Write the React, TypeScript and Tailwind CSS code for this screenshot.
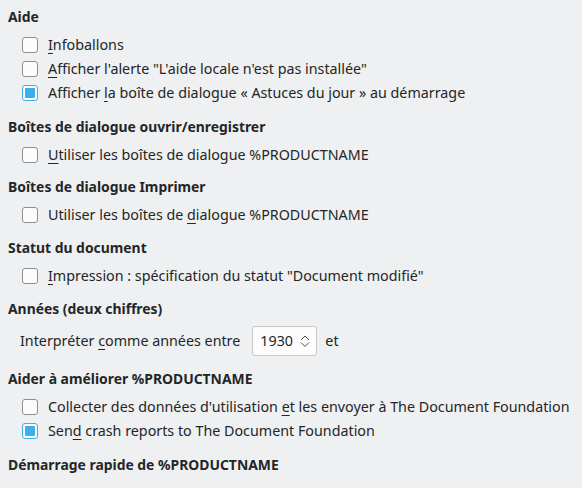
import React from "react";

function Box({ checked }: { checked?: boolean }) {
  return (
    <span
      className={
        checked
          ? "flex h-4 w-4 shrink-0 items-center justify-center rounded-[3px] border border-[#3daee9] bg-[#fcfcfc]"
          : "flex h-4 w-4 shrink-0 items-center justify-center rounded-[3px] border border-[#8d8f91] bg-[#fcfcfc]"
      }
    >
      {checked && <span className="h-2.5 w-2.5 rounded-[1px] bg-[#3daee9]" />}
    </span>
  );
}

function Row({ checked, children }: { checked?: boolean; children: React.ReactNode }) {
  return (
    <div className="flex h-6 items-center gap-2.5 pl-[22px]">
      <Box checked={checked} />
      <span>{children}</span>
    </div>
  );
}

function Heading({ children }: { children: React.ReactNode }) {
  return <div className="flex h-5 items-center pl-2 text-[13.9px] font-bold">{children}</div>;
}

function Key({ children }: { children: React.ReactNode }) {
  return <u className="underline decoration-1 underline-offset-[3px]">{children}</u>;
}

export default function App() {
  return (
    <div
      className="h-[488px] w-[582px] overflow-hidden bg-[#eff0f1] text-[14.3px] text-[#232627]"
      style={{ fontFamily: '"Noto Sans", "DejaVu Sans", sans-serif' }}
    >
      <div className="pt-[7px]">
        <Heading>Aide</Heading>
        <div className="mt-1.5">
          <Row>
            <Key>I</Key>nfoballons
          </Row>
          <Row>
            <Key>A</Key>fficher l'alerte "L'aide locale n'est pas installée"
          </Row>
          <Row checked>
            Afficher <Key>l</Key>a boîte de dialogue « Astuces du jour » au démarrage
          </Row>
        </div>
      </div>

      <div className="mt-3">
        <Heading>Boîtes de dialogue ouvrir/enregistrer</Heading>
        <div className="mt-1.5">
          <Row>
            <Key>U</Key>tiliser les boîtes de dialogue %PRODUCTNAME
          </Row>
        </div>
      </div>

      <div className="mt-2.5">
        <Heading>Boîtes de dialogue Imprimer</Heading>
        <div className="mt-1.5">
          <Row>
            Utiliser les boîtes de <Key>d</Key>ialogue %PRODUCTNAME
          </Row>
        </div>
      </div>

      <div className="mt-[11px]">
        <Heading>Statut du document</Heading>
        <div className="mt-1.5">
          <Row>
            <Key>I</Key>mpression : spécification du statut "Document modifié"
          </Row>
        </div>
      </div>

      <div className="mt-[11px]">
        <Heading>Années (deux chiffres)</Heading>
        <div className="mt-[7px] flex h-[30px] items-center pl-5">
          <span>
            Interpréter <Key>c</Key>omme années entre
          </span>
          <div className="ml-[12px] flex h-[30px] w-[65px] items-center justify-between rounded-[3px] border border-[#c4c6c8] bg-[#fcfcfc] pl-[7px] pr-[6px]">
            <span>1930</span>
            <svg width="10" height="16" viewBox="0 0 10 16" fill="none" stroke="#4d4f51" strokeWidth="1">
              <path d="M1 7 L5 3 L9 7" />
              <path d="M1 9.5 L5 13.5 L9 9.5" />
            </svg>
          </div>
          <span className="ml-2">et</span>
        </div>
      </div>

      <div className="mt-[13px]">
        <Heading>Aider à améliorer %PRODUCTNAME</Heading>
        <div className="mt-1.5">
          <Row>
            Collecter des données d'utilisation <Key>e</Key>t les envoyer à The Document Foundation
          </Row>
          <Row checked>
            Sen<Key>d</Key> crash reports to The Document Foundation
          </Row>
        </div>
      </div>

      <div className="mt-3">
        <Heading>Démarrage rapide de %PRODUCTNAME</Heading>
      </div>
    </div>
  );
}
